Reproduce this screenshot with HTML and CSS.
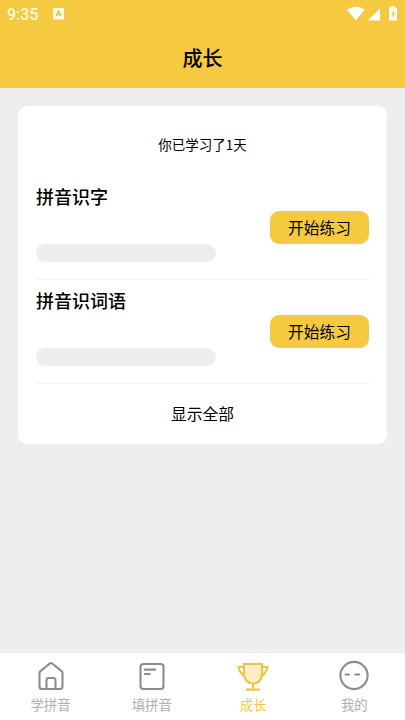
FILE: index.html
```html
<!DOCTYPE html>
<html lang="zh-CN">
<head>
<meta charset="utf-8">
<meta name="viewport" content="width=device-width, initial-scale=1">
<title>成长</title>
<link rel="stylesheet" href="styles.css">
</head>
<body>
<header class="header">
  <div class="status">
    <span class="clock">9:35</span>
    <svg class="notice" width="11" height="12" viewBox="0 0 11 12"><rect width="11" height="11.5" rx="1.3" fill="#fffce8"/><path d="M3 8.2 5.2 3h.6L8 8.2M3.8 6.6h3.4" fill="none" stroke="#e8bd3c" stroke-width="1.3"/></svg>
    <svg class="signals" width="51" height="15" viewBox="0 0 51 15" fill="#fff"><path d="M0 3.8C5-.3 13-.3 17.500 3.800L8.800 14.500Z"/><path d="M33 2.500v12H20.700Z"/><path fill-rule="evenodd" d="M44.200 1.500V.3h3.800v1.200h1.200q.8 0 .8.8v11.400q0 .8-.8.8h-6.400q-.8 0-.8-.8V2.300q0-.8.8-.8ZM47 3.800 44 8.500h1.600v4l2.600-5h-1.600Z"/></svg>
  </div>
  <h1 class="title">成长</h1>
</header>
<main class="content">
  <section class="card">
    <p class="days">你已学习了1天</p>
    <article class="row">
      <div class="info"><h2>拼音识字</h2><div class="progress"></div></div>
      <button class="start">开始练习</button>
    </article>
    <article class="row">
      <div class="info"><h2>拼音识词语</h2><div class="progress"></div></div>
      <button class="start">开始练习</button>
    </article>
    <div class="all">显示全部</div>
  </section>
</main>
<nav class="tabs">
  <a class="tab"><svg viewBox="0 0 32 32"><path d="M4.500 12.900Q4.500 12 5.200 11.400L14.800 3.500q1.200-.9 2.400 0l9.600 7.900q.7.600.7 1.500v13.600q0 2.500-2.500 2.500H7q-2.500 0-2.500-2.500Z"/><path d="M11.500 28.500v-8.200q0-2.300 2.300-2.300h4.400q2.300 0 2.300 2.300v8.200"/></svg><span>学拼音</span></a>
  <a class="tab"><svg viewBox="0 0 32 32"><rect x="4.500" y="4" width="23" height="25" rx="2.800"/><path d="M8.800 9.600h10.400M8.800 14h5"/></svg><span>填拼音</span></a>
  <a class="tab active"><svg viewBox="0 0 32 32"><path d="M7 7H1.500q1.500 7 7.100 9.700M25 7h5.500q-1.500 7-7.100 9.700"/><path class="cup" d="M7 4h18v10.500q-1.200 9-9 9t-9-9Z"/><path d="M16 24v5.500M9 29.600h14"/></svg><span>成长</span></a>
  <a class="tab"><svg viewBox="0 0 32 32"><circle cx="16" cy="15.500" r="13.600"/><path d="M7.600 14.500h3.300M17.200 14.500h4"/></svg><span>我的</span></a>
</nav>
</body>
</html>
```
FILE: styles.css
```css
* { box-sizing: border-box; }
body {
  margin: 0;
  height: 720px;
  display: flex;
  flex-direction: column;
  background: #eee;
  color: #000;
  font-family: "Noto Sans CJK SC", sans-serif;
}
h1, h2, p { margin: 0; font-weight: 500; }
.header { height: 88px; background: #f5ca41; }
.status { height: 28px; display: flex; align-items: center; padding: 0 7px; }
.clock { width: 46px; padding-top: 1px; color: #fffbe5; font: 500 16px/28px Roboto, sans-serif; }
.signals { margin: 0 0 2px auto; }
.title { text-align: center; font-size: 20px; line-height: 60px; }
.content { flex: 1; padding: 18px; }
.card { height: 338px; padding: 0 18px; border-radius: 9px; background: #fff; }
.days { height: 70px; padding-top: 28px; text-align: center; font-size: 13.5px; font-weight: 400; line-height: 20px; }
.row {
  height: 104px;
  display: flex;
  justify-content: space-between;
  align-items: center;
  border-bottom: 1px solid #f2f2f2;
}
.info { height: 100%; padding-top: 7px; }
.info h2 { font-size: 18px; line-height: 26px; }
.progress { width: 180px; height: 18px; margin-top: 35px; border-radius: 9px; background: #eee; }
.start {
  width: 99px;
  height: 33px;
  padding: 0;
  border: 0;
  border-radius: 9px;
  background: #f5ca41;
  color: #000;
  font: 400 15.75px/33px "Noto Sans CJK SC", sans-serif;
}
.all { text-align: center; font-size: 15.75px; line-height: 60px; }
.tabs { height: 67px; display: flex; background: #fff; }
.tab { flex: 1; display: flex; flex-direction: column; align-items: center; padding-top: 7px; color: #b0b0b0; font-size: 13.5px; line-height: 20px; }
.tab svg { width: 32px; height: 32px; fill: none; stroke: #8c8c8c; stroke-width: 2.1; stroke-linecap: round; stroke-linejoin: round; }
.tab span { margin-top: 2px; }
.tab.active { color: #f5ca41; }
.active svg { stroke: #edc744; stroke-linecap: butt; stroke-linejoin: miter; }
.cup { fill: #fcefc8; }
```
